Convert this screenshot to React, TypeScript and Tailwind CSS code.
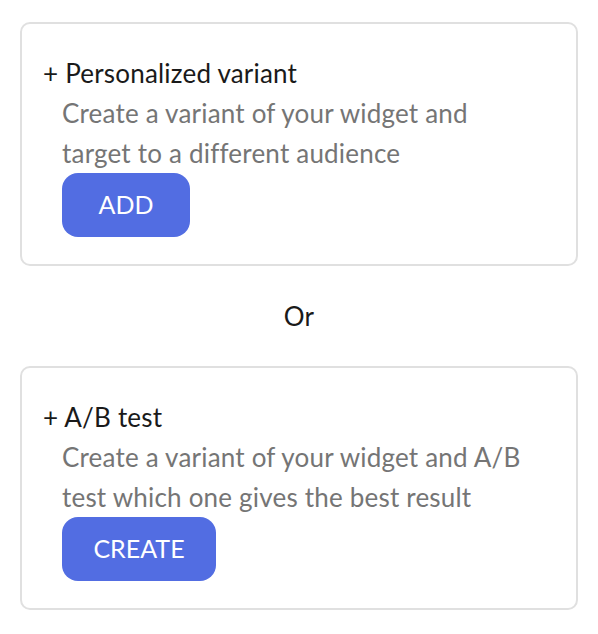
export default function App() {
  return (
    <div className="min-h-[634px] w-[598px] bg-white px-5 pt-[22px] font-['Lato',sans-serif] tracking-[0.2px]">
      <OptionCard
        title="Personalized variant"
        lines={['Create a variant of your widget and', 'target to a different audience']}
        action="ADD"
        buttonWidth="w-[128px]"
      />
      <div className="flex h-[100px] items-center justify-center text-[26px] leading-10 text-[#1a1a1a]">Or</div>
      <OptionCard
        title="A/B test"
        lines={['Create a variant of your widget and A/B', 'test which one gives the best result']}
        action="CREATE"
        buttonWidth="w-[154px]"
      />
    </div>
  );
}

interface OptionCardProps {
  title: string;
  lines: string[];
  action: string;
  buttonWidth: string;
}

function OptionCard({ title, lines, action, buttonWidth }: OptionCardProps) {
  return (
    <div className="rounded-[10px] border-2 border-[#e0e0e0] bg-white pb-[27px] pl-[21px] pt-[29px]">
      <div className="text-[26px] leading-10 text-[#1a1a1a]">+ {title}</div>
      <div className="pl-[19px]">
        {lines.map((line) => (
          <div key={line} className="whitespace-nowrap text-[26px] leading-10 text-[#757575]">
            {line}
          </div>
        ))}
        <button
          type="button"
          className={`${buttonWidth} flex h-16 items-center justify-center rounded-2xl bg-[#526de2] text-[25px] tracking-normal text-white`}
        >
          {action}
        </button>
      </div>
    </div>
  );
}
